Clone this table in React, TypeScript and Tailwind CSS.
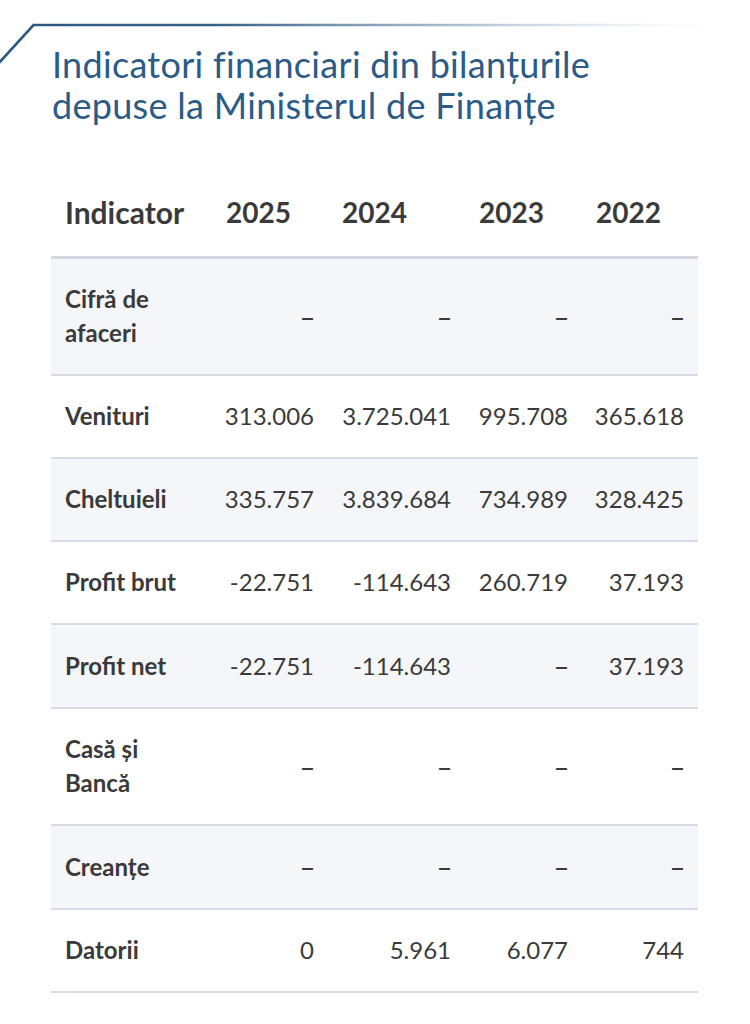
import React from "react";

const rows: { label: string[]; values: string[]; shaded: boolean }[] = [
  { label: ["Cifră de", "afaceri"], values: ["–", "–", "–", "–"], shaded: true },
  { label: ["Venituri"], values: ["313.006", "3.725.041", "995.708", "365.618"], shaded: false },
  { label: ["Cheltuieli"], values: ["335.757", "3.839.684", "734.989", "328.425"], shaded: true },
  { label: ["Profit brut"], values: ["-22.751", "-114.643", "260.719", "37.193"], shaded: false },
  { label: ["Profit net"], values: ["-22.751", "-114.643", "–", "37.193"], shaded: true },
  { label: ["Casă și", "Bancă"], values: ["–", "–", "–", "–"], shaded: false },
  { label: ["Creanțe"], values: ["–", "–", "–", "–"], shaded: true },
  { label: ["Datorii"], values: ["0", "5.961", "6.077", "744"], shaded: false },
];

const years = ["2025", "2024", "2023", "2022"];

export default function App() {
  return (
    <div
      className="relative w-[750px] min-h-[1024px] bg-white"
      style={{ fontFamily: "Lato, 'Open Sans', sans-serif" }}
    >
      <svg
        className="absolute left-0 top-0"
        width="750"
        height="70"
        viewBox="0 0 750 70"
        aria-hidden="true"
      >
        <defs>
          <linearGradient id="topline" gradientUnits="userSpaceOnUse" x1="0" y1="0" x2="720" y2="0">
            <stop offset="0" stopColor="#2b5882" stopOpacity="1" />
            <stop offset="0.3" stopColor="#2b5882" stopOpacity="0.95" />
            <stop offset="0.65" stopColor="#6f8eab" stopOpacity="0.55" />
            <stop offset="1" stopColor="#c9d4df" stopOpacity="0" />
          </linearGradient>
        </defs>
        <path d="M-2 64 L33.5 25 L720 25" fill="none" stroke="url(#topline)" strokeWidth="2.6" />
      </svg>

      <div className="px-[52px] pt-[44px]">
        <h1 className="text-[36px] leading-[41px] font-normal tracking-[0.3px] text-[#2b5b87]">
          Indicatori financiari din bilanțurile
          <br />
          depuse la Ministerul de Finanțe
        </h1>
      </div>

      <div className="mt-[48px] pl-[51px]">
        <table className="table-fixed border-collapse w-[647px] text-[#3a3a3a]">
          <colgroup>
            <col className="w-[161px]" />
            <col className="w-[116px]" />
            <col className="w-[137px]" />
            <col className="w-[117px]" />
            <col className="w-[116px]" />
          </colgroup>
          <thead>
            <tr className="border-b-[3px] border-[#d3d9e3]">
              <th className="pl-[14px] pt-[21px] pb-[27px] text-left text-[30px] leading-[34px] font-bold">
                Indicator
              </th>
              {years.map((y) => (
                <th
                  key={y}
                  className="pl-[14px] pt-[21px] pb-[27px] text-left text-[28px] leading-[34px] font-bold"
                >
                  {y}
                </th>
              ))}
            </tr>
          </thead>
          <tbody>
            {rows.map((r, i) => (
              <tr
                key={i}
                className={
                  (r.shaded ? "bg-[#f4f6f9] " : "bg-white ") + "border-b-2 border-[#d6dce5]"
                }
              >
                <td className="pl-[14px] pt-[23px] pb-[24px] text-left text-[24px] leading-[34px] font-bold">
                  {r.label.map((l, j) => (
                    <div key={j}>{l}</div>
                  ))}
                </td>
                {r.values.map((v, j) => (
                  <td
                    key={j}
                    className="pr-[14px] pt-[23px] pb-[24px] text-right text-[24px] leading-[34px] font-normal whitespace-nowrap"
                  >
                    {v === "–" ? (
                      <span className="font-['Noto_Sans',sans-serif] text-[26px]">–</span>
                    ) : (
                      v
                    )}
                  </td>
                ))}
              </tr>
            ))}
          </tbody>
        </table>
      </div>
    </div>
  );
}
